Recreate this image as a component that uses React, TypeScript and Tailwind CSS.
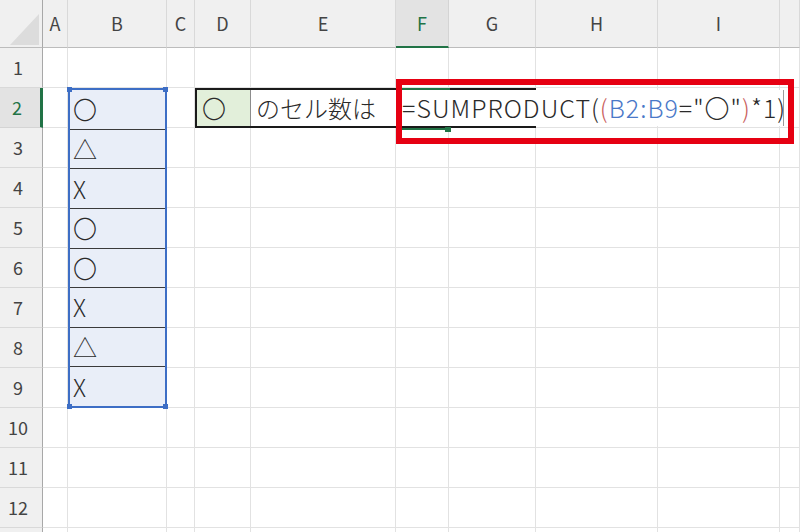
import React from 'react';

const COLS = ['A', 'B', 'C', 'D', 'E', 'F', 'G', 'H', 'I', 'J'];
const ROWS = [1, 2, 3, 4, 5, 6, 7, 8, 9, 10, 11, 12, 13];
const VALUES = ['〇', '△', 'X', '〇', '〇', 'X', '△', 'X'];

const Cell: React.FC = () => <div className="border-r border-b border-[#e2e2e2] bg-white" />;

const ColHead: React.FC<{ label: string; active?: boolean }> = ({ label, active }) => (
  <div
    className={
      active
        ? 'flex items-center justify-center border-r border-[#d4d4d4] border-b-2 border-b-[#217346] bg-[#e3e3e3] text-[18px] text-[#217346]'
        : 'flex items-center justify-center border-r border-[#d9d9d9] border-b border-b-[#bcbcbc] bg-[#f0f0f0] text-[18px] text-[#444]'
    }
  >
    {label}
  </div>
);

const RowHead: React.FC<{ n: number; active?: boolean }> = ({ n, active }) => (
  <div
    className={
      active
        ? 'flex items-center justify-center pr-[6px] border-b border-[#d4d4d4] border-r-[3px] border-r-[#217346] bg-[#e3e3e3] text-[18px] text-[#217346]'
        : 'flex items-center justify-center pr-[6px] border-b border-[#d9d9d9] border-r border-r-[#a8a8a8] bg-[#f0f0f0] text-[18px] text-[#444]'
    }
  >
    {n < 13 ? n : ''}
  </div>
);

// B2:B9 selected range
const Selection: React.FC = () => (
  <div className="row-span-8 relative flex flex-col border-2 border-[#3d6ec5] bg-[#e9eef8]">
    {VALUES.map((v, i) => (
      <div
        key={i}
        className={
          i < VALUES.length - 1
            ? 'flex-1 flex items-center pl-[3px] border-b border-[#3a3a3a] text-[24px] font-light text-[#2a2a2a]'
            : 'flex-1 flex items-center pl-[3px] text-[24px] font-light text-[#2a2a2a]'
        }
      >
        {v}
      </div>
    ))}
    <span className="absolute -top-[3px] -left-[3px] w-[5px] h-[5px] bg-[#3d6ec5]" />
    <span className="absolute -top-[3px] -right-[3px] w-[5px] h-[5px] bg-[#3d6ec5]" />
    <span className="absolute -bottom-[3px] -left-[3px] w-[5px] h-[5px] bg-[#3d6ec5]" />
    <span className="absolute -bottom-[3px] -right-[3px] w-[5px] h-[5px] bg-[#3d6ec5]" />
  </div>
);

// D2:G2 with the formula being edited in F2
const LabelBox: React.FC = () => (
  <div className="col-span-4 flex border-y-2 border-l-2 border-[#1a1a1a] bg-white text-[24px] font-light text-[#2a2a2a]">
    <div className="w-[54px] flex items-center pl-[5px] border-r border-[#8c8c8c] bg-[#e2efda]">〇</div>
    <div className="w-[145px] flex items-center pl-[5px]">のセル数は</div>
    <div className="flex-1 min-w-0 relative">
      <div className="relative z-10 w-[388px] h-full flex items-center pl-[6px] whitespace-nowrap text-[25px] tracking-[1px] bg-white border-r border-[#9c9c9c]">
        <span>=SUMPRODUCT(</span>
        <span className="text-[#c9605d]">(</span>
        <span className="text-[#4a78c8]">B2:B9</span>
        <span>="〇"</span>
        <span className="text-[#c9605d]">)</span>
        <span>*1)</span>
      </div>
      <span className="absolute z-20 -top-[2px] left-0 w-[54px] h-[2px] bg-[#217346]" />
      <span className="absolute z-20 -bottom-[4px] left-0 w-[50px] h-[2px] bg-[#217346]" />
      <span className="absolute z-20 -bottom-[6px] left-[49px] w-[6px] h-[5px] bg-[#217346]" />
    </div>
  </div>
);

export default function App() {
  return (
    <div className="relative w-[800px] h-[532px] overflow-hidden bg-white font-['Noto_Sans_CJK_JP','Noto_Sans',sans-serif]">
      <div className="grid grid-cols-[43px_25px_99px_28px_56px_145px_53px_87px_122px_122px_20px] grid-rows-[48px_repeat(13,40px)]">
        <div className="relative border-r border-r-[#a8a8a8] border-b border-b-[#bcbcbc] bg-[#f0f0f0]">
          <svg className="absolute left-0 top-0" width="43" height="48" viewBox="0 0 43 48">
            <polygon points="10,45 39,45 39,14" fill="#dcdcdc" />
          </svg>
        </div>
        {COLS.map(c => (
          <ColHead key={c} label={c === 'J' ? '' : c} active={c === 'F'} />
        ))}
        {ROWS.map(r => (
          <React.Fragment key={r}>
            <RowHead n={r} active={r === 2} />
            {COLS.map(c => {
              if (c === 'B' && r >= 2 && r <= 9) return r === 2 ? <Selection key={c} /> : null;
              if (r === 2 && ['D', 'E', 'F', 'G'].includes(c)) return c === 'D' ? <LabelBox key={c} /> : null;
              return <Cell key={c} />;
            })}
          </React.Fragment>
        ))}
      </div>

      {/* annotation around the formula */}
      <div className="absolute left-[396px] top-[79px] w-[398px] h-[65px] border-[6px] border-[#e60012] z-30 pointer-events-none" />
    </div>
  );
}
